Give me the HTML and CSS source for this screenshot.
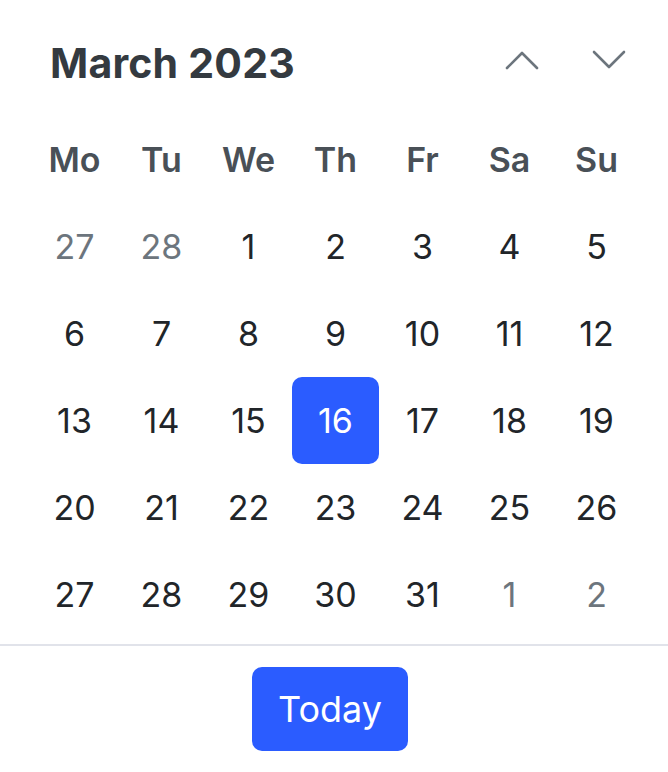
FILE: index.html
```html
<!DOCTYPE html>
<html lang="en">
  <head>
    <meta charset="UTF-8" />
    <meta name="viewport" content="width=device-width, initial-scale=1.0" />
    <title>Calendar</title>
    <link rel="stylesheet" href="styles.css">
  </head>
  <body>
    <div class="calendar">
      <div class="cal-header">
        <h2 class="cal-title">March 2023</h2>
        <div class="cal-nav">
          <button class="nav-btn" type="button" aria-label="Previous month">
            <svg width="34" height="22" viewBox="0 0 34 22"><path d="M2 19 L17 4 L32 19" /></svg>
          </button>
          <button class="nav-btn" type="button" aria-label="Next month">
            <svg width="34" height="22" viewBox="0 0 34 22"><path d="M2 3 L17 18 L32 3" /></svg>
          </button>
        </div>
      </div>

      <div class="cal-grid">
        <div class="weekday">Mo</div>
        <div class="weekday">Tu</div>
        <div class="weekday">We</div>
        <div class="weekday">Th</div>
        <div class="weekday">Fr</div>
        <div class="weekday">Sa</div>
        <div class="weekday">Su</div>

        <div class="day muted">27</div>
        <div class="day muted">28</div>
        <div class="day">1</div>
        <div class="day">2</div>
        <div class="day">3</div>
        <div class="day">4</div>
        <div class="day">5</div>

        <div class="day">6</div>
        <div class="day">7</div>
        <div class="day">8</div>
        <div class="day">9</div>
        <div class="day">10</div>
        <div class="day">11</div>
        <div class="day">12</div>

        <div class="day">13</div>
        <div class="day">14</div>
        <div class="day">15</div>
        <div class="day selected">16</div>
        <div class="day">17</div>
        <div class="day">18</div>
        <div class="day">19</div>

        <div class="day">20</div>
        <div class="day">21</div>
        <div class="day">22</div>
        <div class="day">23</div>
        <div class="day">24</div>
        <div class="day">25</div>
        <div class="day">26</div>

        <div class="day">27</div>
        <div class="day">28</div>
        <div class="day">29</div>
        <div class="day">30</div>
        <div class="day">31</div>
        <div class="day muted">1</div>
        <div class="day muted">2</div>
      </div>

      <div class="cal-footer">
        <button class="today-btn" type="button">Today</button>
      </div>
    </div>
  </body>
</html>
```

FILE: styles.css
```css
body {
  margin: 0;
  background: #ffffff;
  font-family: Inter, "Noto Sans", sans-serif;
}

.calendar {
  width: 668px;
  height: 772px;
  overflow: hidden;
}

.cal-header {
  display: flex;
  align-items: center;
  justify-content: space-between;
  height: 116px;
  padding: 10px 42px 0 50px;
  box-sizing: border-box;
}

.cal-title {
  margin: 0;
  font-size: 41px;
  font-weight: 700;
  color: #343a40;
  letter-spacing: 0.2px;
}

.cal-nav {
  display: flex;
  gap: 53px;
  margin-top: -6px;
}

.nav-btn {
  border: 0;
  padding: 0;
  background: none;
  cursor: pointer;
  display: flex;
}

.nav-btn path {
  fill: none;
  stroke: #6c757d;
  stroke-width: 2.6;
  stroke-linecap: round;
  stroke-linejoin: round;
}

.cal-grid {
  display: grid;
  grid-template-columns: repeat(7, 87px);
  grid-auto-rows: 87px;
  padding-left: 31px;
}

.weekday,
.day {
  display: flex;
  align-items: center;
  justify-content: center;
}

.weekday {
  font-size: 34px;
  font-weight: 600;
  color: #495057;
}

.day {
  font-size: 34px;
  font-weight: 400;
  color: #212529;
}

.day.muted {
  color: #6c757d;
}

.day.selected {
  background: #2b5cff;
  color: #ffffff;
  border-radius: 10px;
}

.cal-footer {
  margin-top: 6px;
  border-top: 2px solid #e1e3ea;
  display: flex;
  justify-content: center;
  padding: 21px 8px 0 0;
}

.today-btn {
  width: 156px;
  height: 84px;
  border: 0;
  border-radius: 10px;
  background: #2b5cff;
  color: #ffffff;
  font-family: Inter, "Noto Sans", sans-serif;
  font-size: 36px;
  font-weight: 400;
  cursor: pointer;
}
```
